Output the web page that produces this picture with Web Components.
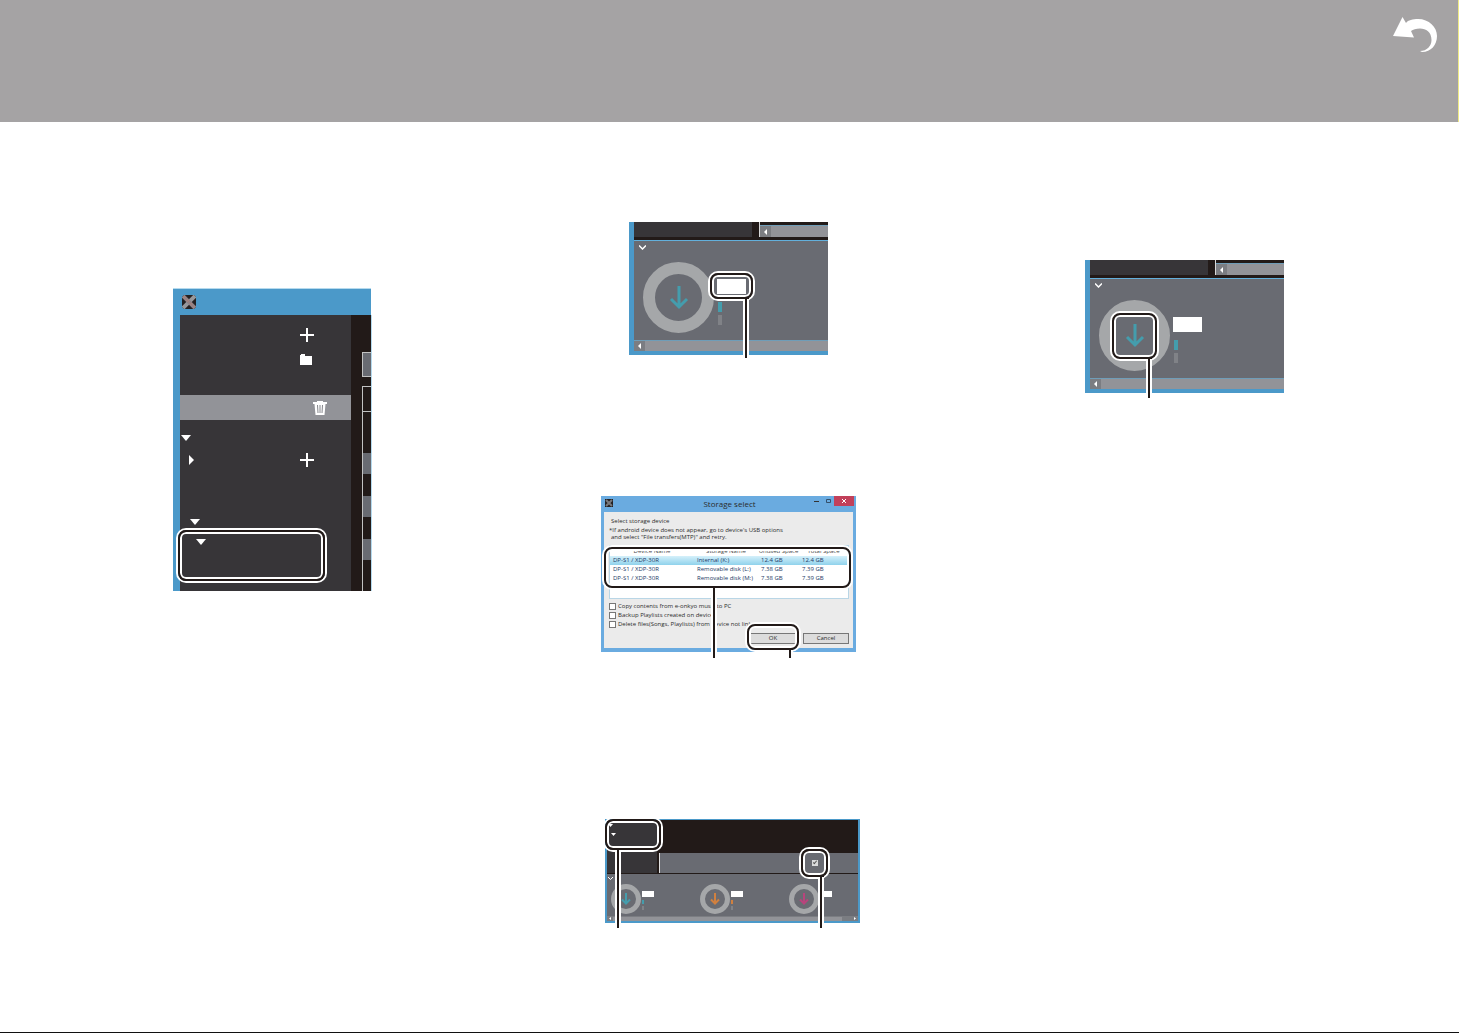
<!DOCTYPE html>
<html lang="en">
<head>
<meta charset="utf-8">
<meta name="viewport" content="width=device-width, initial-scale=1">
<title>Storage select</title>
<style>
  * {
    box-sizing: border-box;
  }
  body {
    margin: 0;
    min-height: 100vh;
    display: flex;
    flex-direction: column;
    background: #fff;
    border-bottom: 1px solid #111;
    font-family: "Open Sans", "Noto Sans", sans-serif;
  }
  main {
    flex: 1;
    display: grid;
    grid-template-columns: repeat(3, 1fr);
    padding: 0 47px 0 44px;
  }
  section {
    display: flex;
    flex-direction: column;
    align-items: center;
  }
  .first {
    padding-top: 166px;
  }
  .second {
    padding-top: 100px;
  }
  .third {
    padding-top: 138px;
  }
  device-panel {
    margin-left: 1px;
  }
  storage-dialog {
    margin-top: 141px;
    margin-left: 1px;
  }
  device-overview {
    margin-top: 167px;
    margin-left: 9px;
  }
</style>
</head>
<body>
<page-banner></page-banner>
<main>
  <section class="first">
    <library-sidebar></library-sidebar>
  </section>
  <section class="second">
    <device-panel>
      <callout-box style="left: 76px; top: 51px; width: 43px; height: 26px; --leader-x: 31px; --leader-length: 61px"></callout-box>
    </device-panel>
    <storage-dialog></storage-dialog>
    <device-overview></device-overview>
  </section>
  <section class="third">
    <device-panel>
      <callout-box filled style="left: 22px; top: 53px; width: 45px; height: 46px; --leader-x: 32px; --leader-length: 41px">
        <download-arrow></download-arrow>
      </callout-box>
    </device-panel>
  </section>
</main>

<script>
class PageBanner extends HTMLElement {
  constructor() {
    super();
    this.attachShadow({ mode: "open" });
  }

  connectedCallback() {
    this.shadowRoot.innerHTML = `
      <style>
        :host {
          display: block;
        }
        header {
          box-sizing: border-box;
          height: 122px;
          display: flex;
          justify-content: flex-end;
          padding: 17px 20px 0 0;
          background: #a5a3a4;
          border-right: 1px solid #efea86;
        }
        a {
          display: block;
          height: 36px;
        }
        svg {
          display: block;
        }
      </style>
      <header>
        <a href="#" aria-label="Back">
          <svg width="45" height="36" viewBox="0 0 45 36">
            <path fill="#fff" d="M0 19L9.500 0L13 6C15 3 20 2 25 2C36 2 44 10 44 19C44 28 38 35 29 35L27 34C34 34 38.500 29 38.500 23C38.500 15 33 11.500 27 11.500C23 11.500 20 12.500 18 14L21 20.500Z"/>
          </svg>
        </a>
      </header>
    `;
  }
}

// Rounded highlight with a leader line that hangs below it
class CalloutBox extends HTMLElement {
  constructor() {
    super();
    this.attachShadow({ mode: "open" });
  }

  connectedCallback() {
    this.shadowRoot.innerHTML = `
      <style>
        :host {
          position: absolute;
          z-index: 1;
          box-sizing: border-box;
          display: flex;
          align-items: center;
          justify-content: center;
          border: 2px solid #221a18;
          border-radius: 8px;
          box-shadow: 0 0 0 2px #fff, inset 0 0 0 2px #fff;
        }
        :host([filled]) {
          background: #696b72;
        }
        .leader {
          position: absolute;
          top: 100%;
          left: var(--leader-x, 0);
          width: 2px;
          height: var(--leader-length, 0);
          background: #221a18;
          border: solid #fff;
          border-width: 0 2px;
          background-clip: padding-box;
          display: var(--leader-display, block);
        }
        /* closes the frame where the leader's white edges cross it */
        .leader::before {
          content: "";
          position: absolute;
          left: -2px;
          top: 0;
          width: 6px;
          height: 2px;
          background: #221a18;
        }
      </style>
      <slot></slot>
      <div class="leader"></div>
    `;
  }
}

class DownloadArrow extends HTMLElement {
  constructor() {
    super();
    this.attachShadow({ mode: "open" });
  }

  connectedCallback() {
    this.shadowRoot.innerHTML = `
      <style>
        :host {
          display: block;
          width: 20px;
          height: 24px;
          color: #449dad;
        }
        svg {
          display: block;
          width: 100%;
          height: 100%;
        }
        path {
          fill: none;
          stroke: currentColor;
          stroke-width: var(--arrow-stroke, 3);
        }
      </style>
      <svg viewBox="0 0 20 24">
        <path d="M10 0 V21 M2 13 L10 21 L18 13"/>
      </svg>
    `;
  }
}

// Capacity ring with its name plate and legend keys
class DeviceRing extends HTMLElement {
  constructor() {
    super();
    this.attachShadow({ mode: "open" });
  }

  connectedCallback() {
    this.shadowRoot.innerHTML = `
      <style>
        :host {
          display: flex;
          color: #449dad;
        }
        .ring {
          box-sizing: border-box;
          width: 71px;
          height: 71px;
          display: flex;
          align-items: center;
          justify-content: center;
          border: 12px solid #a5a7a9;
          border-radius: 50%;
        }
        download-arrow {
          color: inherit;
        }
        .info {
          padding: 17px 0 0 3px;
        }
        .plate {
          width: 29px;
          height: 15px;
          background: #fff;
        }
        .key {
          width: 4px;
          height: 10px;
          margin: 8px 0 0 1px;
          background: currentColor;
        }
        .key + .key {
          margin-top: 3px;
          background: #808287;
        }
        :host([small]) .ring {
          width: 30px;
          height: 30px;
          border-width: 5px;
        }
        :host([small]) download-arrow {
          width: 10px;
          height: 12px;
          --arrow-stroke: 4;
        }
        :host([small]) .info {
          padding: 7px 0 0 1px;
        }
        :host([small]) .plate {
          width: 12px;
          height: 6px;
        }
        :host([small]) .key {
          width: 2px;
          height: 4px;
          margin: 3px 0 0;
        }
        :host([small]) .key + .key {
          margin-top: 2px;
        }
      </style>
      <div class="ring"><download-arrow></download-arrow></div>
      <div class="info">
        <div class="plate"></div>
        <div class="key"></div>
        <div class="key"></div>
      </div>
    `;
  }
}

class LibrarySidebar extends HTMLElement {
  constructor() {
    super();
    this.attachShadow({ mode: "open" });
  }

  connectedCallback() {
    this.shadowRoot.innerHTML = `
      <style>
        :host {
          position: relative;
          box-sizing: border-box;
          display: flex;
          flex-direction: column;
          width: 198px;
          height: 303px;
          background: #4b99c9;
          border-top: 1px solid #b5daee;
        }
        .title {
          height: 26px;
          padding: 6px 8px 0 9px;
          box-sizing: border-box;
        }
        .content {
          flex: 1;
          display: flex;
          margin-left: 7px;
        }
        nav {
          width: 171px;
          box-sizing: border-box;
          padding-top: 8px;
          background: #373538;
        }
        button {
          display: block;
          padding: 0;
          border: 0;
          background: none;
          color: #fff;
        }
        svg {
          display: block;
        }
        .row {
          box-sizing: border-box;
          display: flex;
          align-items: center;
          height: 24px;
          padding-left: 120px;
        }
        .selected {
          height: 25px;
          margin: 24px 0 8px;
          padding-left: 133px;
          background: #929398;
        }
        .branch {
          display: flex;
          align-items: center;
          height: 20px;
          margin-bottom: 2px;
        }
        .level-0 {
          padding-left: 1px;
        }
        .level-1 {
          padding-left: 9px;
        }
        .level-2 {
          padding-left: 10px;
          margin: 42px 0 0;
        }
        .level-3 {
          padding-left: 16px;
        }
        .add {
          margin-left: 106px;
        }
        .tracks {
          flex: 1;
          display: flex;
          flex-direction: column;
          padding: 37px 0 0 11px;
          background: #221a18;
          border-right: 1px solid #b5daee;
          margin-right: -1px;
        }
        .filter {
          height: 23px;
          background: #696b72;
          border: solid #c3c3c3;
          border-width: 1px 0 1px 1px;
        }
        .list {
          flex: 1;
          margin-top: 9px;
          border: solid #c3c3c3;
          border-width: 1px 0 0 1px;
        }
        .head {
          height: 24px;
          border-bottom: 1px solid #c3c3c3;
          margin-bottom: 41px;
        }
        .stripe {
          height: 21px;
          margin-bottom: 22px;
          background: #696b72;
        }
        callout-box {
          left: 5px;
          top: 241px;
          width: 147px;
          height: 51px;
          --leader-display: none;
        }
      </style>
      <div class="title">
        <svg width="14" height="14" viewBox="0 0 14 14">
          <path fill="#242021" d="M2 0H12L14 2V12L12 14H2L0 12V2Z"/>
          <path stroke="#96979b" stroke-width="4" d="M1 13L13 1"/>
          <path stroke="#8b8389" stroke-width="4" d="M1 1L13 13"/>
          <path stroke="#c3816f" stroke-width="1" stroke-dasharray="1 1" d="M1 2L12 13M2 1L13 12"/>
        </svg>
      </div>
      <div class="content">
        <nav>
          <div class="row">
            <button aria-label="Add"><svg width="14" height="14"><path stroke="#fff" stroke-width="2" d="M7 0V14M0 7H14"/></svg></button>
          </div>
          <div class="row">
            <button aria-label="Folder"><svg width="12" height="11"><path fill="#fff" d="M0 11V1H1V0H5V2H12V11Z"/></svg></button>
          </div>
          <div class="row selected">
            <button aria-label="Delete">
              <svg width="14" height="14" viewBox="0 0 14 14">
                <path fill="#fff" d="M0 1H4V0H10V1H14V3H12.500L11.500 14H2.500L1.500 3H0Z"/>
                <path stroke="#85868b" d="M4.500 4L5 12M7 4V12M9.500 4L9 12"/>
              </svg>
            </button>
          </div>
          <div class="branch level-0"><svg width="10" height="6"><path fill="#fff" d="M0 0H10L5 6Z"/></svg></div>
          <div class="branch level-1">
            <svg width="5" height="10"><path fill="#fff" d="M0 0L5 5L0 10Z"/></svg>
            <button class="add" aria-label="Add"><svg width="14" height="14"><path stroke="#fff" stroke-width="2" d="M7 0V14M0 7H14"/></svg></button>
          </div>
          <div class="branch level-2"><svg width="10" height="6"><path fill="#fff" d="M0 0H10L5 6Z"/></svg></div>
          <div class="branch level-3"><svg width="10" height="6"><path fill="#fff" d="M0 0H10L5 6Z"/></svg></div>
        </nav>
        <div class="tracks">
          <div class="filter"></div>
          <div class="list">
            <div class="head"></div>
            <div class="stripe"></div>
            <div class="stripe"></div>
            <div class="stripe"></div>
          </div>
        </div>
      </div>
      <callout-box></callout-box>
    `;
  }
}

class DevicePanel extends HTMLElement {
  constructor() {
    super();
    this.attachShadow({ mode: "open" });
  }

  connectedCallback() {
    this.shadowRoot.innerHTML = `
      <style>
        :host {
          position: relative;
          display: block;
          box-sizing: border-box;
          width: 199px;
          border: solid #4b99c9;
          border-width: 0 0 4px 5px;
        }
        .top {
          display: flex;
          gap: 7px;
          height: 15px;
          padding-bottom: 3px;
          background: #221a18;
        }
        .side {
          width: 118px;
          background: #373538;
        }
        .right {
          flex: 1;
          padding-top: 3px;
          border-left: 1px solid #d8d8d8;
        }
        .scroll {
          display: flex;
          align-items: center;
          box-sizing: border-box;
          height: 11px;
          border-top: 1px solid #6f9db8;
          background: #929398;
        }
        .right .scroll {
          height: 12px;
        }
        .scroll button {
          display: flex;
          align-items: center;
          justify-content: center;
          width: 11px;
          height: 100%;
          padding: 0;
          border: 0;
          background: #7b7d82;
        }
        .panel {
          box-sizing: border-box;
          height: 100px;
          padding: 4px 0 0 5px;
          border-top: 1px solid #63b0dc;
          background: #696b72;
        }
        svg {
          display: block;
        }
        device-ring {
          margin: 12px 0 0 4px;
        }
      </style>
      <div class="top">
        <div class="side"></div>
        <div class="right">
          <div class="scroll"><button aria-label="Left"><svg width="3" height="6"><path fill="#fff" d="M3 0V6L0 3Z"/></svg></button></div>
        </div>
      </div>
      <div class="panel">
        <svg width="7" height="5"><path fill="none" stroke="#fff" stroke-width="1.500" d="M0 .5L3.500 4L7 .5"/></svg>
        <device-ring></device-ring>
      </div>
      <div class="scroll"><button aria-label="Left"><svg width="3" height="6"><path fill="#fff" d="M3 0V6L0 3Z"/></svg></button></div>
      <slot></slot>
    `;
  }
}

class StorageDialog extends HTMLElement {
  constructor() {
    super();
    this.attachShadow({ mode: "open" });
  }

  connectedCallback() {
    const devices = [
      ["DP-S1 / XDP-30R", "Internal (K:)", "12.4 GB", "12.4 GB"],
      ["DP-S1 / XDP-30R", "Removable disk (L:)", "7.38 GB", "7.39 GB"],
      ["DP-S1 / XDP-30R", "Removable disk (M:)", "7.38 GB", "7.39 GB"],
    ];
    const options = [
      "Copy contents from e-onkyo music to PC",
      "Backup Playlists created on device",
      "Delete files(Songs, Playlists) from device not link",
    ];

    this.shadowRoot.innerHTML = `
      <style>
        :host {
          position: relative;
          display: block;
          box-sizing: border-box;
          width: 255px;
          padding: 0 3px 4px;
          background: #6aabe0;
          color: #2b2b2b;
          font-size: 6px;
          line-height: 8px;
        }
        header {
          display: flex;
          align-items: flex-start;
          height: 16px;
          margin-right: -1px;
        }
        header svg {
          display: block;
        }
        .logo {
          margin: 3px 0 0 1px;
        }
        h2 {
          flex: 1;
          margin: 0;
          padding-left: 36px;
          text-align: center;
          font-size: 8px;
          line-height: 15px;
          font-weight: 400;
        }
        header button {
          display: flex;
          align-items: center;
          justify-content: center;
          width: 12px;
          height: 10px;
          padding: 0;
          border: 0;
          background: none;
        }
        header .close {
          width: 20px;
          background: #c2405a;
        }
        form {
          box-sizing: border-box;
          height: 136px;
          padding: 5px 4px 0 5px;
          background: #ebebeb;
        }
        p {
          margin: 0 2px;
        }
        .note {
          margin: 2px 0 4px;
          line-height: 7px;
        }
        .note span {
          margin-left: 2px;
        }
        .list {
          box-sizing: border-box;
          height: 54px;
          border: 1px solid #b9d6e6;
          background: #fff;
        }
        table {
          width: 100%;
          border-collapse: collapse;
          table-layout: fixed;
          color: #243a66;
        }
        th, td {
          height: 9px;
          padding: 0 0 0 3px;
          line-height: 9px;
          font-weight: 400;
          text-align: left;
          white-space: nowrap;
        }
        th {
          height: 10px;
          padding: 0;
          text-align: center;
          vertical-align: bottom;
          color: #444;
        }
        .selected td {
          background: linear-gradient(#d5f0fa, #8fd2ec);
        }
        .options {
          display: grid;
          gap: 1px;
          margin-top: 3px;
        }
        label {
          display: flex;
          align-items: center;
          gap: 2px;
          height: 8px;
          line-height: 8px;
          white-space: nowrap;
        }
        input {
          appearance: none;
          box-sizing: border-box;
          width: 7px;
          height: 7px;
          margin: 0;
          border: 1px solid #777;
          background: #fff;
        }
        .actions {
          display: flex;
          justify-content: flex-end;
          gap: 7px;
          margin-top: 5px;
        }
        .actions button {
          box-sizing: border-box;
          width: 46px;
          height: 11px;
          padding: 0;
          border: 1px solid #777;
          background: #dcdcdc;
          color: #2b2b2b;
          font: inherit;
          line-height: 9px;
        }
        .devices {
          left: 3px;
          top: 51px;
          width: 247px;
          height: 41px;
          --leader-x: 105px;
          --leader-length: 72px;
        }
        .confirm {
          left: 146px;
          top: 128px;
          width: 52px;
          height: 26px;
          --leader-x: 38px;
          --leader-length: 10px;
        }
      </style>
      <header>
        <svg class="logo" width="8" height="8"><path fill="#242021" d="M0 0H8V8H0Z"/><path stroke="#77787c" stroke-width="2" d="M1 1L7 7M7 1L1 7"/></svg>
        <h2>Storage select</h2>
        <button aria-label="Minimize"><svg width="5" height="1"><path fill="#333" d="M0 0H5V1H0Z"/></svg></button>
        <button aria-label="Maximize"><svg width="5" height="4"><path fill="none" stroke="#35506b" d="M.5 .5H4.500V3.500H.5Z"/></svg></button>
        <button class="close" aria-label="Close"><svg width="4" height="4"><path stroke="#fff" d="M0 0L4 4M4 0L0 4"/></svg></button>
      </header>
      <form>
        <p>Select storage device</p>
        <p class="note">*If android device does not appear, go to device's USB options<br><span>and select "File transfers(MTP)" and retry.</span></p>
        <div class="list">
          <table>
            <colgroup><col style="width: 84px"><col style="width: 64px"><col style="width: 41px"><col></colgroup>
            <thead><tr><th>Device Name</th><th>Storage Name</th><th>Unused Space</th><th>Total Space</th></tr></thead>
            <tbody>
              ${devices.map((row, i) => `<tr${i === 0 ? ' class="selected"' : ""}>${row.map((cell) => `<td>${cell}</td>`).join("")}</tr>`).join("")}
            </tbody>
          </table>
        </div>
        <div class="options">
          ${options.map((text) => `<label><input type="checkbox">${text}</label>`).join("")}
        </div>
        <div class="actions">
          <button type="button">OK</button>
          <button type="button">Cancel</button>
        </div>
      </form>
      <callout-box class="devices"></callout-box>
      <callout-box class="confirm"></callout-box>
    `;
  }
}

class DeviceOverview extends HTMLElement {
  constructor() {
    super();
    this.attachShadow({ mode: "open" });
  }

  connectedCallback() {
    this.shadowRoot.innerHTML = `
      <style>
        :host {
          position: relative;
          display: block;
          box-sizing: border-box;
          width: 255px;
          border: solid #4b99c9;
          border-width: 1px 2px 2px;
          background: #221a18;
        }
        svg {
          display: block;
        }
        .top {
          display: flex;
          gap: 2px;
          height: 53px;
        }
        nav {
          width: 50px;
          box-sizing: border-box;
          padding: 4px 0 0 1px;
          background: #373538;
        }
        nav svg + svg {
          margin: 6px 0 0 3px;
        }
        .tracks {
          flex: 1;
          display: flex;
          flex-direction: column;
          justify-content: flex-end;
        }
        .bar {
          height: 20px;
          display: flex;
          align-items: center;
          justify-content: flex-end;
          padding-right: 40px;
          border-left: 1px solid #e0e0e0;
          background: #696b72;
        }
        input {
          appearance: none;
          width: 6px;
          height: 6px;
          margin: 0;
          background: #d9dadb;
          position: relative;
        }
        input::after {
          content: "";
          position: absolute;
          left: 2px;
          top: 0;
          width: 1px;
          height: 3px;
          border: solid #555;
          border-width: 0 1px 1px 0;
          transform: rotate(40deg);
        }
        .panel {
          margin-top: 1px;
          height: 42px;
          box-sizing: border-box;
          padding: 3px 0 0 1px;
          background: #696b72;
        }
        .rings {
          display: grid;
          grid-template-columns: repeat(3, 89px);
          padding: 4px 0 0 3px;
        }
        .orange {
          color: #d0803f;
        }
        .pink {
          color: #b8447c;
        }
        .scroll {
          display: flex;
          justify-content: space-between;
          align-items: center;
          height: 5px;
          padding: 0 2px;
          background: #7b7d82;
        }
        .thumb {
          flex: 1;
          height: 4px;
          margin: 0 12px 0 2px;
          background: #929398;
        }
        .library {
          left: -2px;
          top: -1px;
          width: 56px;
          height: 31px;
          --leader-x: 8px;
          --leader-length: 80px;
        }
        .sync {
          left: 194px;
          top: 29px;
          width: 27px;
          height: 28px;
          --leader-x: 15px;
          --leader-length: 53px;
        }
      </style>
      <div class="top">
        <nav>
          <svg width="5" height="3"><path fill="#fff" d="M0 0H5L2.500 3Z"/></svg>
          <svg width="5" height="3"><path fill="#fff" d="M0 0H5L2.500 3Z"/></svg>
        </nav>
        <div class="tracks">
          <div class="bar"><input type="checkbox" checked aria-label="Sync"></div>
        </div>
      </div>
      <div class="panel">
        <svg width="5" height="3"><path fill="none" stroke="#fff" d="M0 0L2.500 2.500L5 0"/></svg>
        <div class="rings">
          <device-ring small></device-ring>
          <device-ring small class="orange"></device-ring>
          <device-ring small class="pink"></device-ring>
        </div>
      </div>
      <div class="scroll">
        <svg width="2" height="3"><path fill="#fff" d="M2 0V3L0 1.500Z"/></svg>
        <div class="thumb"></div>
        <svg width="2" height="3"><path fill="#fff" d="M0 0V3L2 1.500Z"/></svg>
      </div>
      <callout-box class="library"></callout-box>
      <callout-box class="sync"></callout-box>
    `;
  }
}

customElements.define("page-banner", PageBanner);
customElements.define("callout-box", CalloutBox);
customElements.define("download-arrow", DownloadArrow);
customElements.define("device-ring", DeviceRing);
customElements.define("library-sidebar", LibrarySidebar);
customElements.define("device-panel", DevicePanel);
customElements.define("storage-dialog", StorageDialog);
customElements.define("device-overview", DeviceOverview);
</script>
</body>
</html>
